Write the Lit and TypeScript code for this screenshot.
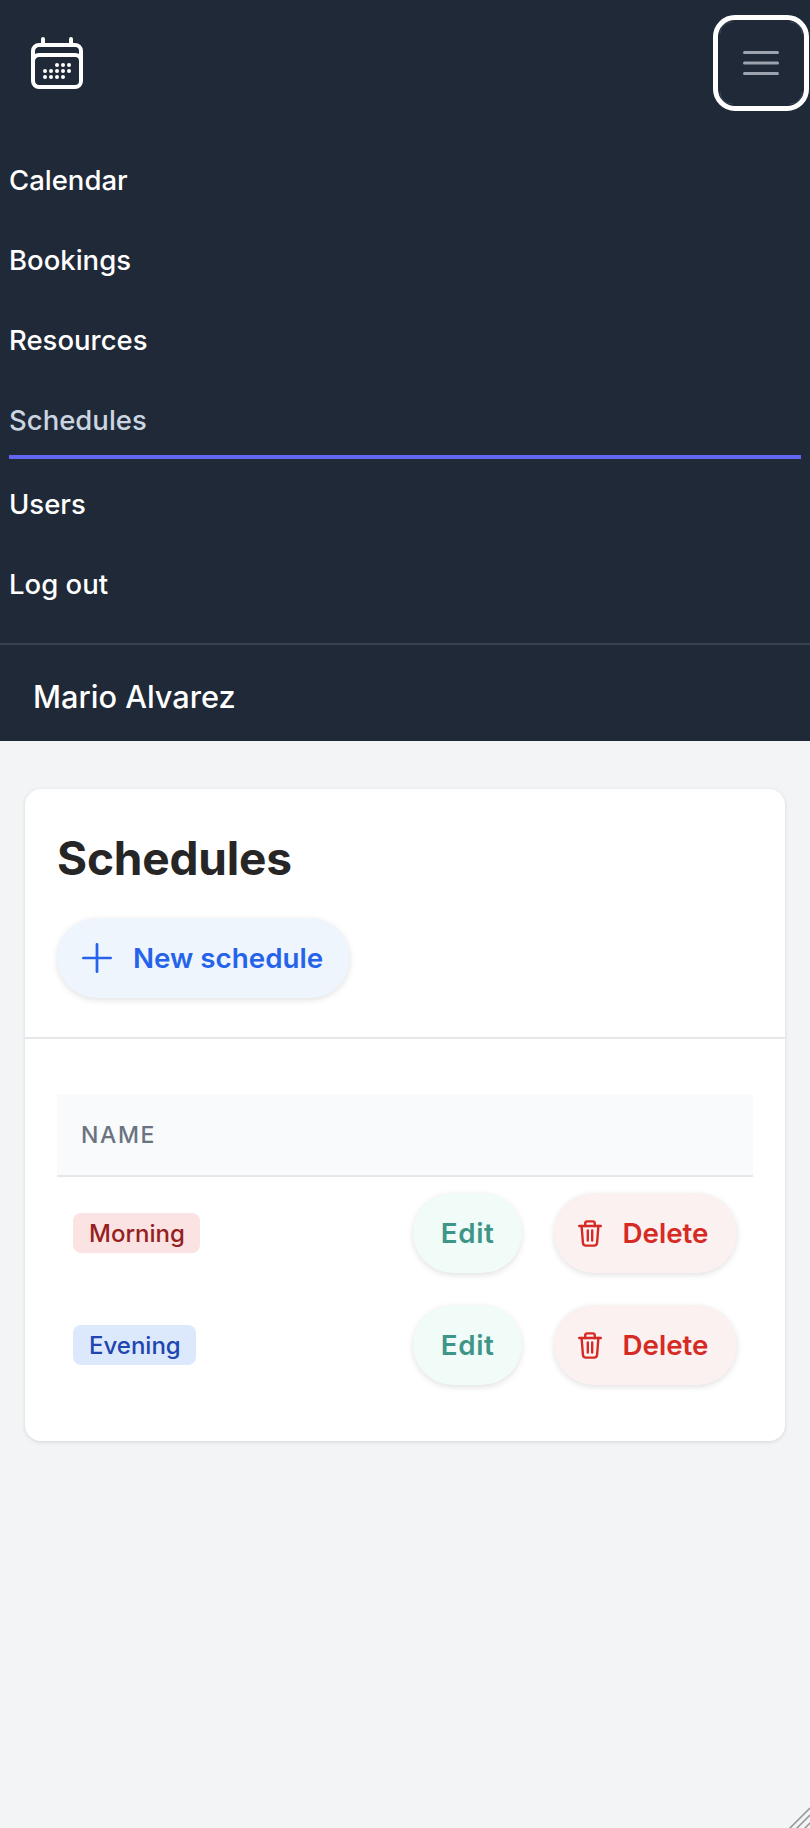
import { LitElement, html, css, svg } from 'lit';
import { customElement } from 'lit/decorators.js';

const calendarIcon = svg`<path stroke-linecap="round" stroke-linejoin="round" d="M6.75 3v2.25M17.25 3v2.25M3 18.75V7.5a2.25 2.25 0 012.25-2.25h13.5A2.25 2.25 0 0121 7.5v11.25m-18 0A2.25 2.25 0 005.25 21h13.5A2.25 2.25 0 0021 18.75m-18 0v-7.5A2.25 2.25 0 015.25 9h13.5A2.25 2.25 0 0121 11.25v7.5m-9-6h.008v.008H12v-.008zM12 15h.008v.008H12V15zm0 2.25h.008v.008H12v-.008zM9.75 15h.008v.008H9.75V15zm0 2.25h.008v.008H9.75v-.008zM7.5 15h.008v.008H7.5V15zm0 2.25h.008v.008H7.5v-.008zm6.75-4.5h.008v.008h-.008v-.008zm0 2.25h.008v.008h-.008V15zm0 2.25h.008v.008h-.008v-.008zm2.25-4.5h.008v.008H16.5v-.008zm0 2.25h.008v.008H16.5V15z"/>`;

const trashIcon = html`<svg class="trash" viewBox="0 0 24 27" fill="none" stroke="currentColor" stroke-width="2.4" stroke-linecap="round" stroke-linejoin="round">
  <path d="M1.2 6h21.6"/>
  <path d="M7.2 6V3.6q0-2.2 2.2-2.2h5.2q2.2 0 2.2 2.2V6"/>
  <path d="M3.6 6l1.3 16.6q.2 3 3 3h8.2q2.8 0 3-3L20.4 6"/>
  <path d="M9.8 10.5v10M14.2 10.5v10"/>
</svg>`;

@customElement('app-root')
export class AppRoot extends LitElement {
    static styles = css`
        :host {
            display: block;
            position: relative;
            min-height: 1828px;
            background: #f3f4f6;
            font-family: Inter, 'Noto Sans', sans-serif;
            overflow: hidden;
        }

        nav {
            background: #1f2937;
        }

        .top {
            display: flex;
            align-items: center;
            justify-content: space-between;
            height: 95px;
            padding: 15px 1px 0 25px;
        }

        .logo {
            width: 64px;
            height: 64px;
            color: #fff;
        }

        .menu {
            position: relative;
            display: flex;
            align-items: center;
            justify-content: center;
            box-sizing: border-box;
            width: 96px;
            height: 96px;
            padding: 0;
            background: none;
            border: 5px solid #fff;
            border-radius: 22px;
        }

        .menu svg.bars {
            width: 48px;
            height: 48px;
            color: #9ca3af;
        }

        .menu svg.ring {
            position: absolute;
            inset: -5px;
            width: 96px;
            height: 96px;
        }

        .links {
            display: flex;
            flex-direction: column;
            padding: 30px 9px 0;
        }

        .links a {
            display: block;
            padding: 20px 0;
            font-size: 27.5px;
            line-height: 40px;
            font-weight: 500;
            color: #fff;
        }

        .links a.active {
            padding-bottom: 15px;
            margin-bottom: 5px;
            border-bottom: 4px solid #6366f1;
            color: #cbd5e1;
        }

        .user {
            margin-top: 19px;
            border-top: 2px solid #374151;
            padding: 32px 33px 24px;
            font-size: 30.7px;
            line-height: 40px;
            font-weight: 500;
            color: #fff;
        }

        main {
            padding: 48px 25px;
        }

        .card {
            background: #fff;
            border-radius: 16px;
            box-shadow: 0 1px 4px rgba(0, 0, 0, 0.12);
            padding-bottom: 40px;
        }

        .head {
            display: flex;
            flex-direction: column;
            align-items: flex-start;
            padding: 39px 32px 39px;
            border-bottom: 2px solid #e5e7eb;
        }

        h1 {
            margin: 0 0 30px;
            font-size: 46px;
            line-height: 60px;
            font-weight: 700;
            letter-spacing: -0.2px;
            color: #262626;
        }

        .btn {
            display: inline-flex;
            align-items: center;
            box-sizing: border-box;
            height: 80px;
            padding-top: 1px;
            border: none;
            border-radius: 40px;
            font-family: inherit;
            font-size: 27.75px;
            font-weight: 600;
            box-shadow: 0 2px 6px rgba(0, 0, 0, 0.12);
        }

        .btn.new {
            gap: 21px;
            padding-left: 25px;
            padding-right: 27px;
            background: #eff5fd;
            color: #2563eb;
        }

        .btn.new svg {
            width: 30px;
            height: 30px;
        }

        .btn.edit {
            padding-left: 28px;
            padding-right: 28px;
            letter-spacing: 0.6px;
            background: #f1fbf8;
            color: #3d9688;
        }

        .btn.delete {
            gap: 20px;
            padding-left: 24px;
            padding-right: 28.5px;
            background: #fcf1f1;
            color: #d62b25;
        }

        .trash {
            width: 24px;
            height: 27px;
        }

        .table {
            margin: 55px 32px 0;
        }

        .th {
            box-sizing: border-box;
            height: 83px;
            display: flex;
            align-items: center;
            padding: 1px 0 0 24px;
            background: #f9fafb;
            border-bottom: 2px solid #e5e7eb;
            font-size: 23px;
            font-weight: 500;
            letter-spacing: 0.07em;
            color: #6b7280;
        }

        .row {
            display: flex;
            align-items: center;
            justify-content: space-between;
            height: 112px;
            padding: 0 16px;
        }

        .badge {
            padding: 1px 15.5px 0 16px;
            border-radius: 8px;
            font-size: 24px;
            line-height: 39px;
            font-weight: 500;
        }

        .badge.red {
            background: #fbe3e3;
            color: #962020;
        }

        .badge.blue {
            background: #dce8fb;
            color: #2045b0;
        }

        .actions {
            display: flex;
            gap: 32px;
        }

        .grip {
            position: absolute;
            right: 0;
            bottom: 0;
            width: 22px;
            height: 22px;
        }
    `;

    private rows = [
        { name: 'Morning', tone: 'red' },
        { name: 'Evening', tone: 'blue' },
    ];

    private links = ['Calendar', 'Bookings', 'Resources', 'Schedules', 'Users', 'Log out'];

    override render() {
        return html`
            <nav>
                <div class="top">
                    <svg class="logo" viewBox="0 0 24 24" fill="none" stroke="currentColor" stroke-width="1.5">${calendarIcon}</svg>
                    <button class="menu">
                        <svg class="ring" viewBox="0 0 96 96" fill="none" stroke="#3a4658">
                            <path d="M7 19A12 12 0 0 1 19 7M77 7A12 12 0 0 1 89 19M89 77A12 12 0 0 1 77 89M19 89A12 12 0 0 1 7 77"/>
                        </svg>
                        <svg class="bars" viewBox="0 0 24 24" fill="none" stroke="currentColor" stroke-width="1.5" stroke-linecap="round">
                            <path d="M3.75 6.75h16.5M3.75 12h16.5m-16.5 5.25h16.5"/>
                        </svg>
                    </button>
                </div>
                <div class="links">
                    ${this.links.map((l) => html`<a class=${l === 'Schedules' ? 'active' : ''}>${l}</a>`)}
                </div>
                <div class="user">Mario Alvarez</div>
            </nav>
            <main>
                <section class="card">
                    <div class="head">
                        <h1>Schedules</h1>
                        <button class="btn new">
                            <svg viewBox="3.75 3.75 16.5 16.5" fill="none" stroke="currentColor" stroke-width="1.5" stroke-linecap="round">
                                <path d="M12 4.5v15m7.5-7.5h-15"/>
                            </svg>
                            New schedule
                        </button>
                    </div>
                    <div class="table">
                        <div class="th">NAME</div>
                        ${this.rows.map(
                            (r) => html`<div class="row">
                                <span class="badge ${r.tone}">${r.name}</span>
                                <div class="actions">
                                    <button class="btn edit">Edit</button>
                                    <button class="btn delete">${trashIcon}Delete</button>
                                </div>
                            </div>`
                        )}
                    </div>
                </section>
            </main>
            <svg class="grip" viewBox="0 0 22 22" stroke="#9a9a9a" stroke-width="1.6">
                <path d="M22 2L1 23M22 9L8 23M22 17L16 23"/>
            </svg>
        `;
    }
}
